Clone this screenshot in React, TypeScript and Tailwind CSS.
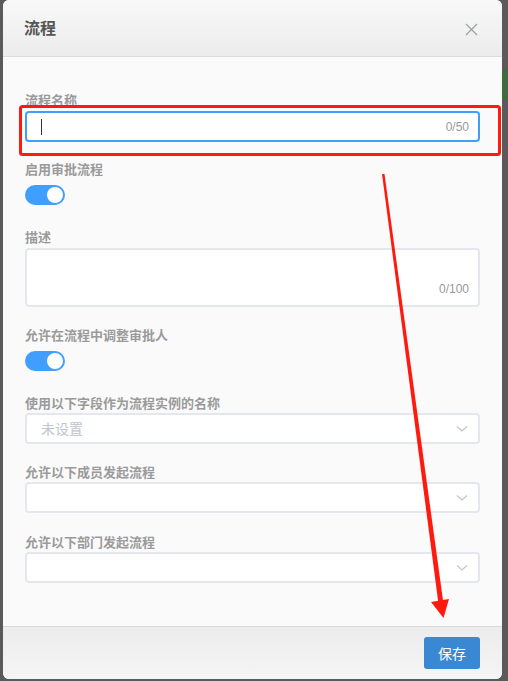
import React from "react";

const font = { fontFamily: '"Noto Sans CJK SC", "Noto Sans", sans-serif' };
const numFont = { fontFamily: '"Liberation Sans", Arial, sans-serif' };

function Label({ children }: { children: React.ReactNode }) {
  return (
    <div className="h-5 flex items-center text-[13px] font-semibold text-[#9a9a9a] leading-none">
      {children}
    </div>
  );
}

function Toggle() {
  return (
    <div className="w-10 h-5 rounded-full bg-[#409eff] flex items-center justify-end pr-[2px]">
      <div className="w-4 h-4 rounded-full bg-white" />
    </div>
  );
}

function Chevron() {
  return (
    <svg width="12" height="8" viewBox="0 0 12 8" className="text-[#c0c4cc]">
      <path d="M1 1.5 L6 6 L11 1.5" fill="none" stroke="currentColor" strokeWidth="1.1" />
    </svg>
  );
}

function Select({ placeholder }: { placeholder?: string }) {
  return (
    <div className="h-[31px] mt-px rounded border-2 border-[#e4e7ed] bg-white flex items-center justify-between pl-[14px] pr-[10px]">
      <span className="text-[14px] text-[#c0c4cc]">{placeholder}</span>
      <Chevron />
    </div>
  );
}

export default function App() {
  return (
    <div className="relative w-[508px] h-[681px] bg-[#5a5a5a] overflow-hidden" style={font}>
      <div className="absolute right-0 top-[70px] w-[6px] h-[30px] bg-[#3f6b3f]" />
      <div className="ml-[3px] w-[499px] h-[679px] rounded-[6px] bg-[#fafafa] flex flex-col overflow-hidden">
        {/* header */}
        <div className="h-[57px] shrink-0 bg-gradient-to-b from-[#f8f8f8] to-[#ececec] border-b border-[#dcdcdc] flex items-center justify-between pl-[21px] pr-[24px]">
          <span className="text-[16px] font-bold text-[#555] mt-[-2px]">流程</span>
          <svg width="13" height="13" viewBox="0 0 13 13" className="text-[#9aa0a6] mt-[3px]">
            <path d="M1 1 L12 12 M12 1 L1 12" stroke="currentColor" strokeWidth="1.2" />
          </svg>
        </div>
        {/* body */}
        <div className="flex-1 px-[22px] pt-[32px]">
          <Label>流程名称</Label>
          <div className="h-[31px] mt-[2px] rounded border-2 border-[#409eff] bg-white flex items-center justify-between pl-[14px] pr-[9px]">
            <span className="w-px h-[16px] bg-[#333]" />
            <span className="text-[12px] text-[#999]" style={numFont}>0/50</span>
          </div>

          <div className="mt-[16px]">
            <Label>启用审批流程</Label>
            <div className="mt-[7px]">
              <Toggle />
            </div>
          </div>

          <div className="mt-[21px]">
            <Label>描述</Label>
            <div className="h-[59px] mt-[2px] rounded border-2 border-[#e4e7ed] bg-white flex items-end justify-end pr-[9px] pb-[10px]">
              <span className="text-[12px] text-[#999] leading-none" style={numFont}>0/100</span>
            </div>
          </div>

          <div className="mt-[17px]">
            <Label>允许在流程中调整审批人</Label>
            <div className="mt-[7px]">
              <Toggle />
            </div>
          </div>

          <div className="mt-[21px]">
            <Label>使用以下字段作为流程实例的名称</Label>
            <Select placeholder="未设置" />
          </div>

          <div className="mt-[17px]">
            <Label>允许以下成员发起流程</Label>
            <Select />
          </div>

          <div className="mt-[18px]">
            <Label>允许以下部门发起流程</Label>
            <Select />
          </div>
        </div>
        {/* footer */}
        <div className="h-[53px] shrink-0 border-t border-[#dadada] bg-gradient-to-b from-[#ececec] to-[#f5f5f5] flex items-start justify-end pr-[22px] pt-[10px]">
          <button className="w-[56px] h-[32px] rounded-[3px] bg-[#3a88d4] text-white text-[14px]">
            保存
          </button>
        </div>
      </div>

      {/* annotations */}
      <svg className="absolute inset-0 pointer-events-none" width="508" height="681" viewBox="0 0 508 681">
        <rect x="20.5" y="106.5" width="479" height="48" rx="2" fill="none" stroke="#ff1a10" strokeWidth="3" />
        <polygon points="382,174 384.5,174 443.5,604 438.5,604" fill="#ff1a10" />
        <polygon points="431,602 449,599 443.5,618" fill="#ff1a10" />
      </svg>
    </div>
  );
}
